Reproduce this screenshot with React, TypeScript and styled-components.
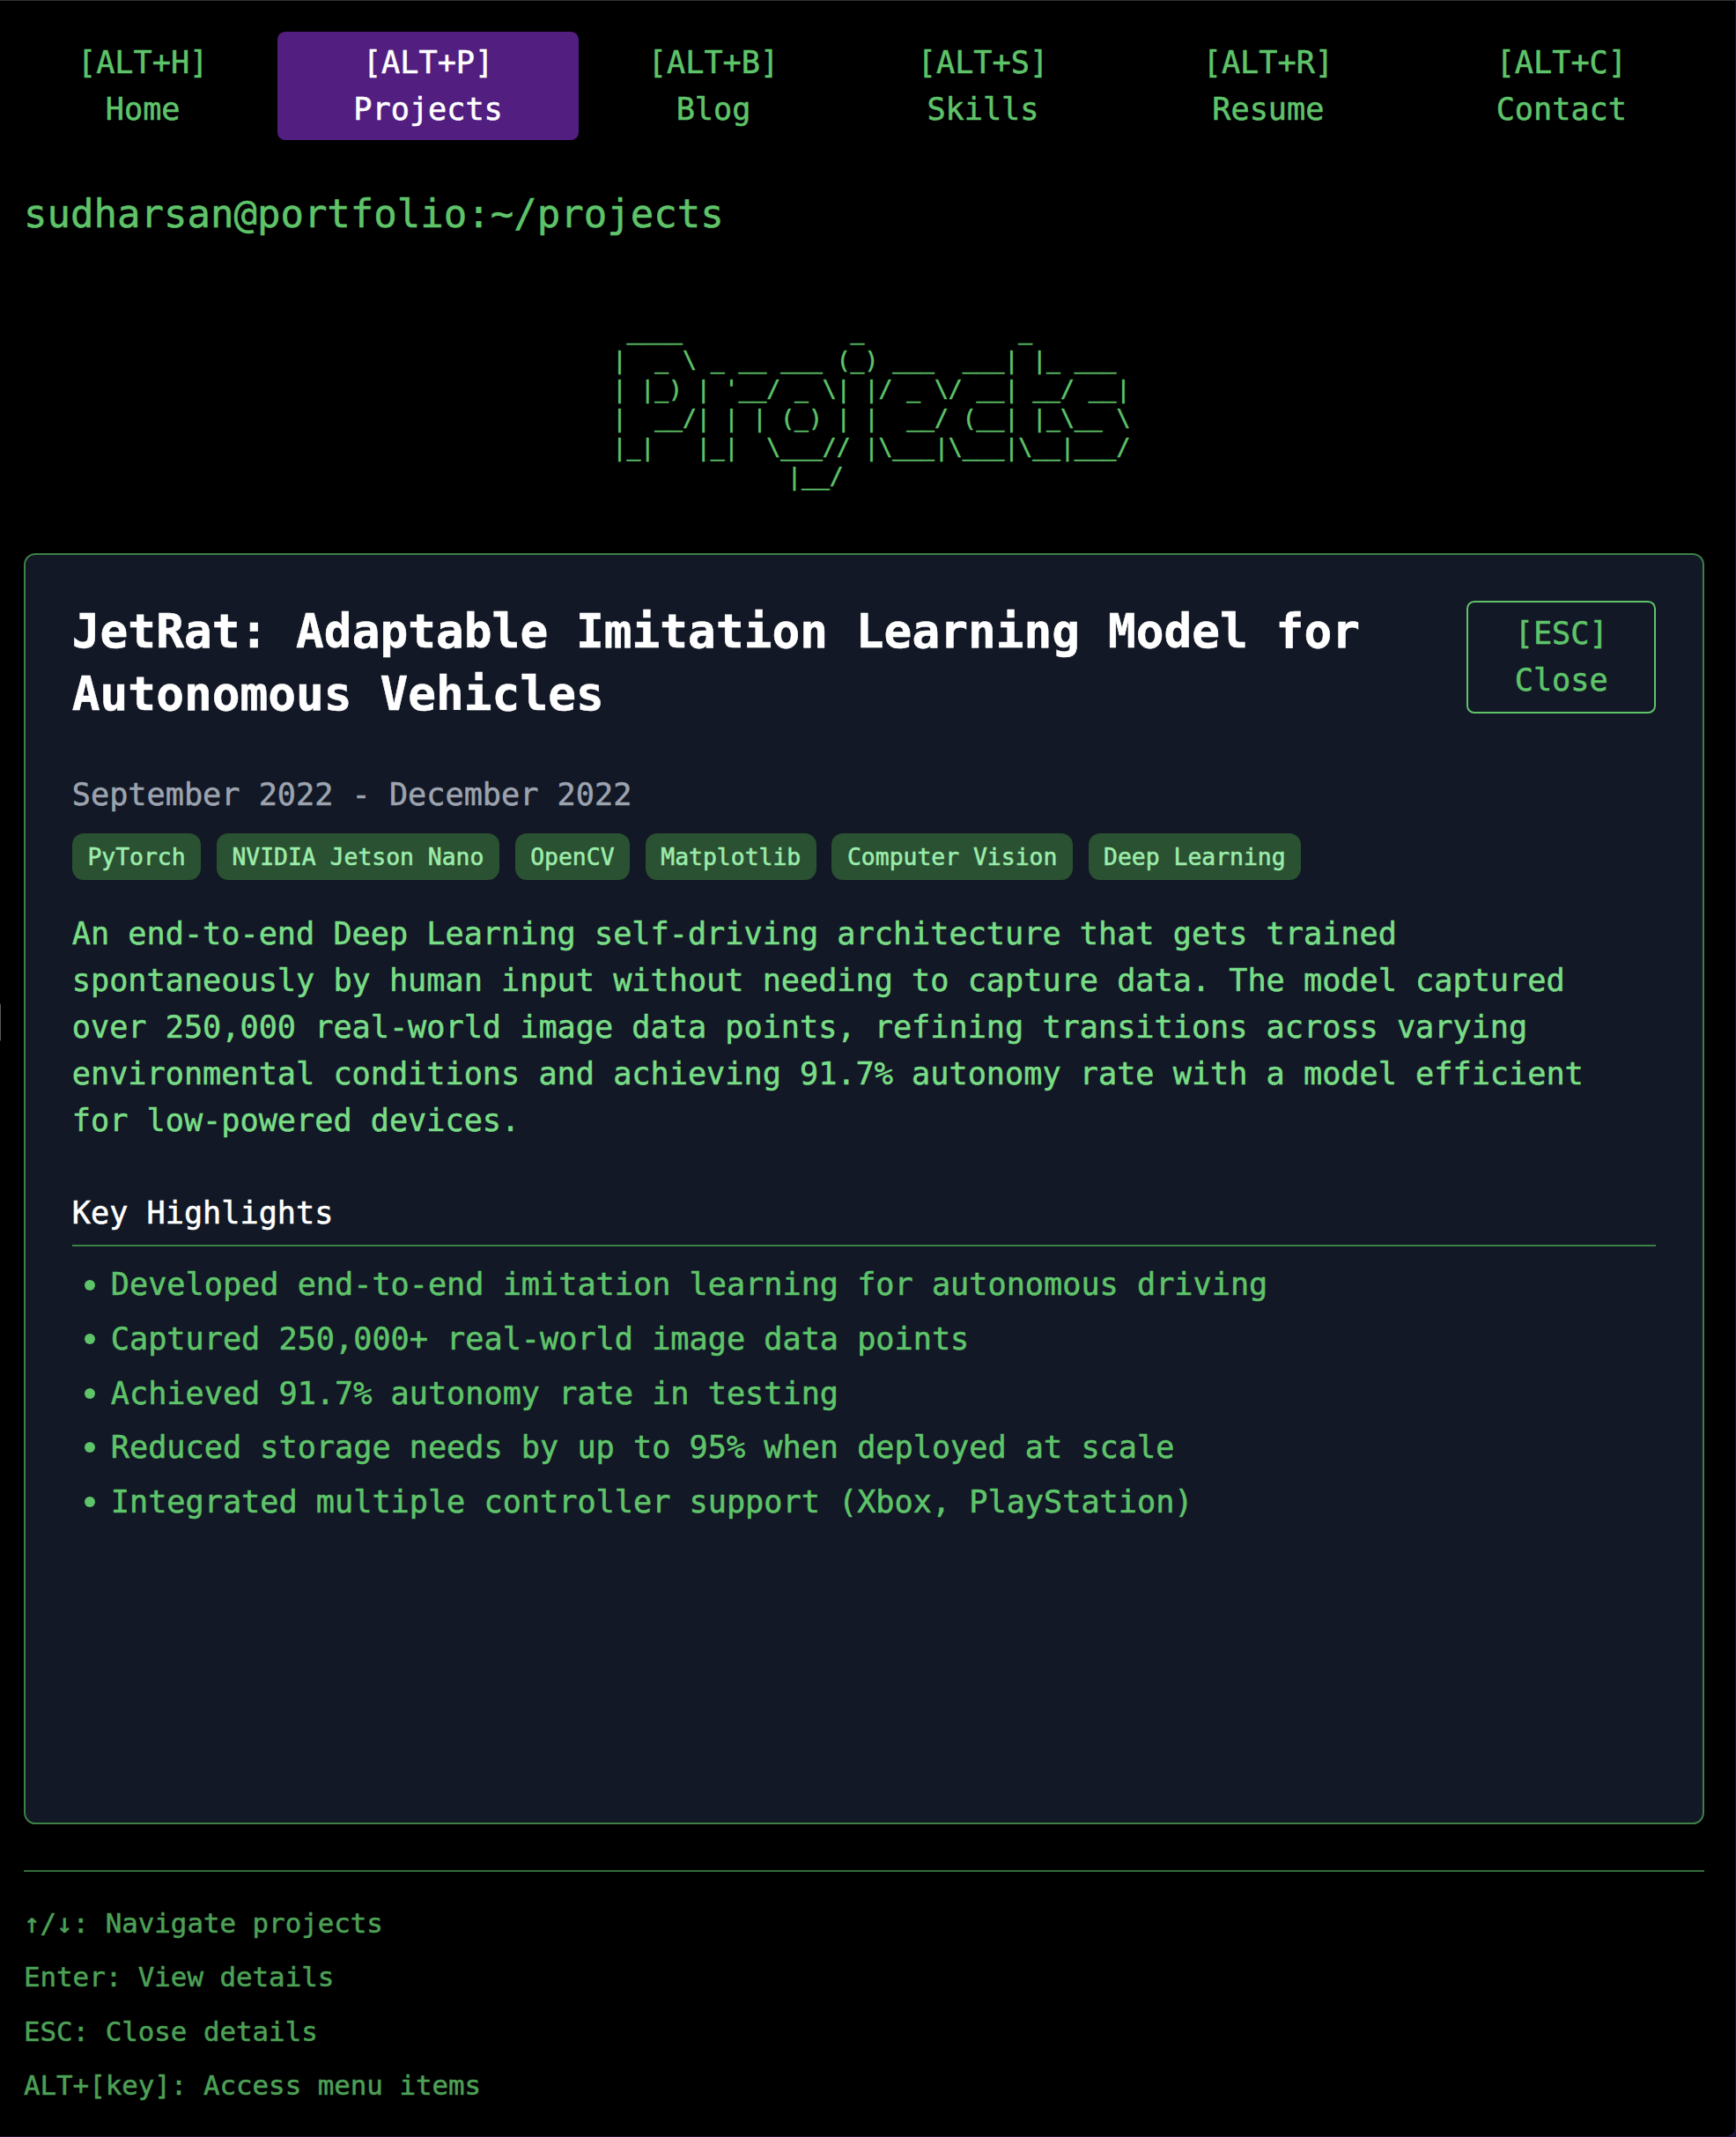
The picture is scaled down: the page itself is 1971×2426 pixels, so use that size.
import React from "react";
import styled, { createGlobalStyle } from "styled-components";

const GlobalStyle = createGlobalStyle`
  *, *::before, *::after { box-sizing: border-box; }
  html { font-size: 35.2px; }
  body { margin: 0; background: #1b1038; }
  h1, h2, p, ul, pre { margin: 0; padding: 0; font: inherit; }
  button { font: inherit; border: 0; background: none; padding: 0; cursor: pointer; }
`;

const Page = styled.div`
  position: relative;
  width: 1970px;
  height: 2425px;
  padding: 35px 35px 0 27px;
  border-top: 1px solid #313131;
  border-bottom-right-radius: 10px;
  background: #000;
  color: #5fc36a;
  font-family: Menlo, "DejaVu Sans Mono", "Liberation Mono", monospace;
  font-size: 1rem;
  line-height: 1.5;
  -webkit-text-stroke: 0.55px currentColor;
  overflow: hidden;
`;

const DrawerHandle = styled.div`
  position: absolute;
  left: -3px;
  top: 1138px;
  width: 4px;
  height: 43px;
  border-radius: 2px;
  background: #5a5a5a;
`;

const Nav = styled.nav`
  display: grid;
  grid-template-columns: 270fr 342fr 270fr 306fr 306fr 324fr;
  gap: 0.5rem;
`;

const NavItem = styled.button<{ $active?: boolean }>`
  display: flex;
  flex-direction: column;
  align-items: center;
  padding: 0.25rem 0;
  border-radius: 8.8px;
  color: ${(p) => (p.$active ? "#fff" : "#5fc36a")};
  background: ${(p) => (p.$active ? "#521f81" : "transparent")};
`;

const Prompt = styled.p`
  margin-top: 1.5rem;
  font-size: 1.25rem;
  line-height: 1.75rem;
`;

const Banner = styled.pre`
  margin: 85px 0 71px;
  padding-left: 1px;
  font-family: inherit;
  font-size: 0.75rem;
  line-height: 33px;
  text-align: center;
`;

const Card = styled.main`
  height: 1443px;
  padding: 1.5rem;
  border: 2px solid #3e8146;
  border-radius: 13.2px;
  background: #121825;
`;

const CardHeader = styled.header`
  display: flex;
  justify-content: space-between;
  align-items: flex-start;
  height: 4rem;
  margin-bottom: 1.5rem;
`;

const Title = styled.h1`
  width: 1500px;
  color: #fff;
  font-size: 1.5rem;
  font-weight: 700;
  line-height: 2rem;
`;

const CloseButton = styled.button`
  display: flex;
  flex-direction: column;
  align-items: center;
  width: 215px;
  padding: 0.25rem 0;
  border: 2px solid #5fc36a;
  border-radius: 8.8px;
  color: #5fc36a;
`;

const DateRange = styled.p`
  color: #9ca3af;
`;

const Tags = styled.div`
  display: flex;
  gap: 0.5rem;
  margin: 0.5rem 0 1rem;
`;

const Tag = styled.span`
  padding: 0.25rem 0.5rem;
  border-radius: 13.2px;
  background: #2a5131;
  color: #9cecac;
  font-size: 0.75rem;
  line-height: 1rem;
`;

const Description = styled.p`
  color: #79dc86;
`;

const SectionTitle = styled.h2`
  margin: 1.5rem 0 0.5rem;
  padding-bottom: 0.25rem;
  border-bottom: 2px solid #3e8146;
  color: #fff;
`;

const Highlights = styled.ul`
  display: flex;
  flex-direction: column;
  gap: 0.25rem;
  list-style: none;
`;

const Highlight = styled.li`
  display: flex;
  align-items: center;
  padding-left: 14px;

  &::before {
    content: "";
    width: 12px;
    height: 12px;
    margin-right: 18px;
    border-radius: 50%;
    background: #5fc36a;
  }
`;

const Footer = styled.footer`
  display: flex;
  flex-direction: column;
  gap: 0.5rem;
  margin-top: 1.5rem;
  padding-top: 1rem;
  border-top: 2px solid #356c3b;
  color: #4da056;
  font-size: 0.875rem;
  line-height: 1.25rem;
`;

const menu = [
  { key: "H", label: "Home" },
  { key: "P", label: "Projects", active: true },
  { key: "B", label: "Blog" },
  { key: "S", label: "Skills" },
  { key: "R", label: "Resume" },
  { key: "C", label: "Contact" },
];

const banner = [
  "  ____            _           _       ",
  " |  _ \\ _ __ ___ (_) ___  ___| |_ ___ ",
  " | |_) | '__/ _ \\| |/ _ \\/ __| __/ __|",
  " |  __/| | | (_) | |  __/ (__| |_\\__ \\",
  " |_|   |_|  \\___// |\\___|\\___|\\__|___/",
  "             |__/                    ",
].join("\n");

const tags = ["PyTorch", "NVIDIA Jetson Nano", "OpenCV", "Matplotlib", "Computer Vision", "Deep Learning"];

const highlights = [
  "Developed end-to-end imitation learning for autonomous driving",
  "Captured 250,000+ real-world image data points",
  "Achieved 91.7% autonomy rate in testing",
  "Reduced storage needs by up to 95% when deployed at scale",
  "Integrated multiple controller support (Xbox, PlayStation)",
];

const hints = ["↑/↓: Navigate projects", "Enter: View details", "ESC: Close details", "ALT+[key]: Access menu items"];

export default function App() {
  return (
    <>
      <GlobalStyle />
      <Page>
        <DrawerHandle />
        <Nav>
          {menu.map((m) => (
            <NavItem key={m.key} $active={m.active}>
              <span>[ALT+{m.key}]</span>
              <span>{m.label}</span>
            </NavItem>
          ))}
        </Nav>
        <Prompt>sudharsan@portfolio:~/projects</Prompt>
        <Banner>{banner}</Banner>
        <Card>
          <CardHeader>
            <Title>JetRat: Adaptable Imitation Learning Model for Autonomous Vehicles</Title>
            <CloseButton>
              <span>[ESC]</span>
              <span>Close</span>
            </CloseButton>
          </CardHeader>
          <DateRange>September 2022 - December 2022</DateRange>
          <Tags>
            {tags.map((t) => (
              <Tag key={t}>{t}</Tag>
            ))}
          </Tags>
          <Description>
            An end-to-end Deep Learning self-driving architecture that gets trained spontaneously by human input
            without needing to capture data. The model captured over 250,000 real-world image data points, refining
            transitions across varying environmental conditions and achieving 91.7% autonomy rate with a model
            efficient for low-powered devices.
          </Description>
          <SectionTitle>Key Highlights</SectionTitle>
          <Highlights>
            {highlights.map((h) => (
              <Highlight key={h}>{h}</Highlight>
            ))}
          </Highlights>
        </Card>
        <Footer>
          {hints.map((h) => (
            <span key={h}>{h}</span>
          ))}
        </Footer>
      </Page>
    </>
  );
}
